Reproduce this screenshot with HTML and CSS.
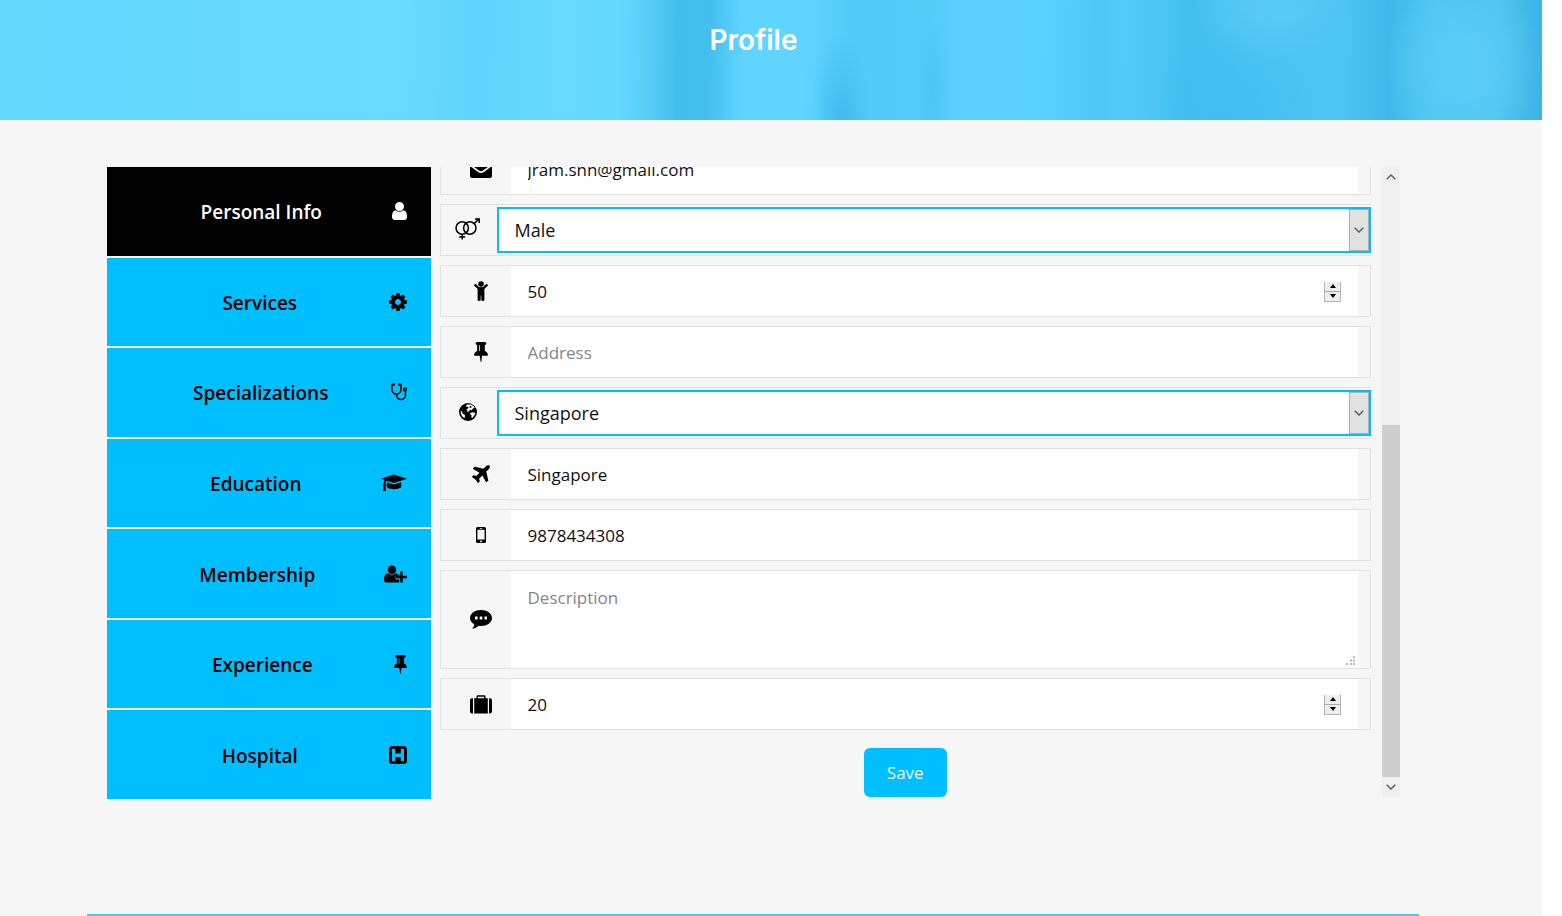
FILE: index.html
```html
<!DOCTYPE html>
<html lang="en">
<head>
<meta charset="utf-8">
<meta name="viewport" content="width=device-width, initial-scale=1">
<title>Profile</title>
<link rel="stylesheet" href="styles.css">
</head>
<body>
<svg class="sprite" aria-hidden="true">
  <symbol id="pin" viewBox="320 128 1152 1664"><path d="M800 864v-448q0-14-9-23t-23-9-23 9-9 23v448q0 14 9 23t23 9 23-9 9-23zm672 352q0 26-19 45t-45 19h-429l-51 483q-2 12-10.500 20.500t-20.500 8.500h-1q-27 0-32-27l-76-485h-404q-26 0-45-19t-19-45q0-123 78.500-221.500t177.500-98.500v-512q-52 0-90-38t-38-90 38-90 90-38h640q52 0 90 38t38 90-38 90-90 38v512q99 0 177.500 98.500t78.500 221.500z"/></symbol>
  <symbol id="chevron" viewBox="0 0 10 6"><path d="M0.700 0.700 5 5 9.300 0.700" fill="none" stroke="#606060" stroke-width="1.500"/></symbol>
</svg>
<div class="page">
  <header class="banner"><h1 class="banner-title">Profile</h1></header>
  <main class="content">
    <nav class="tabs" aria-label="Profile sections">
      <button class="tab tab-active" type="button"><span class="tab-label">Personal Info</span>
        <svg width="15" height="18" viewBox="256 128 1280 1536"><path d="M1536 1399q0 109-62.500 187t-150.500 78h-854q-88 0-150.500-78t-62.500-187q0-85 8.500-160.500t31.500-152 58.500-131 94-89 134.500-34.500q131 128 313 128t313-128q76 0 134.500 34.500t94 89 58.500 131 31.500 152 8.500 160.500zm-256-887q0 159-112.500 271.500t-271.500 112.500-271.500-112.500-112.500-271.500 112.500-271.500 271.500-112.500 271.500 112.500 112.500 271.500z"/></svg></button>
      <button class="tab" type="button"><span class="tab-label">Services</span>
        <svg width="18" height="18" viewBox="128 128 1536 1536"><path d="M1152 896q0-106-75-181t-181-75-181 75-75 181 75 181 181 75 181-75 75-181zm512-109v222q0 12-8 23t-20 13l-185 28q-19 54-39 91 35 50 107 138 10 12 10 25t-9 23q-27 37-99 108t-94 71q-12 0-26-9l-138-108q-44 23-91 38-16 136-29 186-7 28-36 28h-222q-14 0-24.500-8.500t-11.500-21.500l-28-184q-49-16-90-37l-141 107q-10 9-25 9-14 0-25-11-126-114-165-168-7-10-7-23 0-12 8-23 15-21 51-66.500t54-70.500q-27-50-41-99l-183-27q-13-2-21-12.500t-8-23.500v-222q0-12 8-23t19-13l186-28q14-46 39-92-40-57-107-138-10-12-10-24 0-10 9-23 26-36 98.500-107.500t94.500-71.500q13 0 26 10l138 107q44-23 91-38 16-136 29-186 7-28 36-28h222q14 0 24.500 8.500t11.500 21.500l28 184q49 16 90 37l142-107q9-9 24-9 13 0 25 10 129 119 165 170 7 8 7 22 0 12-8 23-15 21-51 66.500t-54 70.500q26 50 41 98l183 28q13 2 21 12.500t8 23.500z"/></svg></button>
      <button class="tab" type="button"><span class="tab-label">Specializations</span>
        <svg width="16" height="18" viewBox="0 0 16 18"><path d="M2.500 1.600H1V6.500a4.500 4.500 0 0 0 9 0V1.600H8.500M5.500 11.200V12a4.500 4.500 0 0 0 9 0V8" fill="none" stroke="currentColor" stroke-width="1.500"/><circle cx="2.700" cy="1.500" r="1.300"/><circle cx="8.300" cy="1.500" r="1.300"/><circle cx="14" cy="6.500" r="1.400" fill="none" stroke="currentColor" stroke-width="1.300"/></svg></button>
      <button class="tab" type="button"><span class="tab-label">Education</span>
        <svg width="26" height="18" viewBox="0 0 26 18"><path d="M13 .5 26 4.800 13 9.100 5.600 6.700Q4.500 7.500 4.400 10a1.300 1.300 0 0 1 .1 2.200L5 17H2l.5-4.800a1.300 1.300 0 0 1 .1-2.200Q2.700 7.500 3.700 6.100L0 4.800ZM6 8.200l7 2.300 7-2.300.4 4.400C19.500 16.100 6.500 16.100 5.600 12.600Z"/></svg></button>
      <button class="tab" type="button"><span class="tab-label">Membership</span>
        <svg width="23" height="18" viewBox="0 0 23 18"><circle cx="8" cy="4.700" r="4.300"/><path d="M4 8.200q4 3.300 8 0 1.500.2 2.300 1.300H15.300v1.800h-3.800v3.200h3.800v2.700q-.6.400-1.500.4H2.800Q0 17.600 0 14.500 0 8.600 4 8.200Z"/><path d="M16.300 6.500h2.400v4.300H23v2.400h-4.300v4.300h-2.400v-4.300H12v-2.400h4.300Z"/></svg></button>
      <button class="tab" type="button"><span class="tab-label">Experience</span>
        <svg width="13" height="19"><use href="#pin"/></svg></button>
      <button class="tab" type="button"><span class="tab-label">Hospital</span>
        <svg width="18" height="18" viewBox="0 0 18 18"><path fill-rule="evenodd" d="M3.500 0h11Q18 0 18 3.500v11q0 3.500-3.500 3.500h-11Q0 18 0 14.500v-11Q0 0 3.500 0ZM3 3.500v11q0 .7.700.7H5.500q.7 0 .7-.7V11h5.600v3.500q0 .7.700.7h1.800q.7 0 .7-.7v-11q0-.7-.7-.7H12.500q-.7 0-.7.700V7.500H6.200v-4q0-.7-.7-.7H3.700q-.7 0-.7.700Z"/></svg></button>
    </nav>

    <form class="panel">
      <div class="fields">
        <div class="row">
          <label class="icon" for="email" aria-label="Email"><svg width="22" height="18" viewBox="0 0 22 18"><path d="M0 2Q0 0 2 0H20Q22 0 22 2 22 4 20 5.500L13 10.500Q11 12 9 10.500L2 5.500Q0 4 0 2ZM0 6 8 12Q11 14.200 14 12L22 6V16Q22 18 20 18H2Q0 18 0 16Z"/></svg></label>
          <input class="control" id="email" type="email" value="jram.snn@gmail.com">
        </div>
        <div class="row row-select">
          <label class="icon" for="gender" aria-label="Gender"><svg width="25" height="22" viewBox="0 0 25 22"><g fill="none" stroke="currentColor" stroke-width="1.500"><circle cx="7.200" cy="10" r="6.200"/><circle cx="14.800" cy="10" r="6.200"/><path d="M7.200 16v5.500M4.200 19h6M19.200 5.600 24 .8M20 .9h4.200V5"/></g></svg></label>
          <span class="select-box"><select class="select" id="gender"><option>Male</option><option>Female</option></select><span class="select-arrow"><svg width="10" height="6"><use href="#chevron"/></svg></span></span>
        </div>
        <div class="row">
          <label class="icon" for="age" aria-label="Age"><svg width="14" height="20" viewBox="0 0 14 20"><circle cx="7" cy="3" r="2.800"/><path d="M1.300 4.200 4.700 7.400H9.300L12.700 4.200" fill="none" stroke="currentColor" stroke-width="2.300" stroke-linecap="round"/><path d="M3.600 6.500h6.800v12.300q-.2 1.200-1.600 1.200T7.300 18.800V14.500H6.700V18.800q0 1.200-1.500 1.200T3.600 18.800Z"/></svg></label>
          <span class="number-box"><input class="control" id="age" type="number" value="50"><span class="spinner"><i class="step step-up"></i><i class="step step-down"></i></span></span>
        </div>
        <div class="row">
          <label class="icon" for="address" aria-label="Address"><svg width="14" height="20"><use href="#pin"/></svg></label>
          <input class="control" id="address" type="text" placeholder="Address">
        </div>
        <div class="row row-select">
          <label class="icon" for="country" aria-label="Country"><svg width="18" height="18" viewBox="0 0 18 18"><circle cx="9" cy="9" r="9"/><path fill="#f5f5f5" d="M8 1.500 12 1.500 14.500 3 16 5.300 14.500 5 13.300 6.500 12.300 7.200 10.800 6.900 9.800 8.600 7.800 8.900 8.600 7.200 7 6.300 8.800 5.700 9.500 4.300 8 3.500 6.500 3.700ZM11.500 9.800 14.300 9.300 16.300 10 15.500 12.300 13.300 15 12.300 14.300 12.500 12.200 11 11.300ZM1.700 7.500 3 8.800 3.900 10.800 5.900 12 6 13.400 5.300 15.200 3.200 13.300 1.800 10.800Z"/><path d="M11 2.800 12.700 3.700 12 4.900 10.300 4.200Z"/></svg></label>
          <span class="select-box"><select class="select" id="country"><option>Singapore</option></select><span class="select-arrow"><svg width="10" height="6"><use href="#chevron"/></svg></span></span>
        </div>
        <div class="row">
          <label class="icon" for="city" aria-label="City"><svg width="18" height="18" viewBox="186 120 1420 1420"><path d="M1568 160q44 52 12 148t-108 172l-161 161 160 696q5 19-12 33l-128 96q-7 6-19 6-4 0-7-1-15-3-21-16l-279-508-259 259 53 194q5 17-8 31l-96 96q-9 9-23 9h-2q-15-2-24-13l-189-252-252-189q-11-7-13-23-1-13 9-25l96-97q9-9 23-9 6 0 8 1l194 53 259-259-508-279q-14-8-17-24-2-16 9-27l128-128q14-13 30-8l665 159 160-160q76-76 172-108t148 12z"/></svg></label>
          <input class="control" id="city" type="text" value="Singapore">
        </div>
        <div class="row">
          <label class="icon" for="phone" aria-label="Phone"><svg width="10" height="16" viewBox="0 0 10 16"><path fill-rule="evenodd" d="M1.500 0h7Q10 0 10 1.500v13Q10 16 8.500 16h-7Q0 16 0 14.500v-13Q0 0 1.500 0ZM1.400 2.700v9.800h7.200V2.700ZM3.700 1v.7h2.600V1ZM5 13.400a.9.900 0 1 0 .1 0Z"/></svg></label>
          <input class="control" id="phone" type="tel" value="9878434308">
        </div>
        <div class="row row-tall">
          <label class="icon" for="description" aria-label="Description"><svg width="22" height="19" viewBox="0 0 22 19"><path fill-rule="evenodd" d="M11 0c6 0 11 3.500 11 8s-5 8-11 8q-1.200 0-2.200-.2Q6 18.500 2 18.800 4 17 4.300 14.200 0 11.900 0 8C0 3.500 5 0 11 0ZM5 6.600v2.800h2.600V6.600ZM9.700 6.600v2.800h2.600V6.600ZM14.400 6.600v2.800H17V6.600Z"/></svg></label>
          <span class="text-box"><textarea class="control control-area" id="description" placeholder="Description"></textarea>
            <svg class="grip" width="10" height="10" viewBox="0 0 10 10"><path d="M7 0h2v2H7zM4 3.500h2v2H4zM7 3.500h2v2H7zM0 7h2v2H0zM4 7h2v2H4zM7 7h2v2H7z"/></svg></span>
        </div>
        <div class="row">
          <label class="icon" for="years" aria-label="Years of experience"><svg width="22" height="19" viewBox="0 0 22 19"><path d="M3 3.300V18.500H2Q0 18.500 0 16.500V5.300Q0 3.300 2 3.300ZM19 3.300h1Q22 3.300 22 5.300v11.200q0 2-2 2H19ZM4.200 3.300H6.500V1.500Q6.500.3 7.700.3h6.600Q15.500.3 15.500 1.500V3.300h2.300V18.500H4.200ZM8 1.800V3.300h6V1.800Z"/></svg></label>
          <span class="number-box"><input class="control" id="years" type="number" value="20"><span class="spinner"><i class="step step-up"></i><i class="step step-down"></i></span></span>
        </div>
        <button class="save" type="submit">Save</button>
      </div>
      <div class="scrollbar" aria-hidden="true">
        <span class="scroll-arrow scroll-up"><svg width="10" height="6"><use href="#chevron"/></svg></span>
        <span class="scroll-space"></span>
        <span class="scroll-thumb"></span>
        <span class="scroll-arrow"><svg width="10" height="6"><use href="#chevron"/></svg></span>
      </div>
    </form>
  </main>
  <footer class="footer"></footer>
</div>
</body>
</html>
```
FILE: styles.css
```css
* { box-sizing: border-box; }

body {
  margin: 0;
  background: #fff;
  font-family: "Open Sans", "Noto Sans", sans-serif;
  font-size: 17px;
  color: #111;
}

svg { display: block; flex: none; fill: currentColor; }
.sprite { position: absolute; width: 0; height: 0; }

.page {
  display: flex;
  flex-direction: column;
  min-height: 100vh;
  margin-right: 20px;
  background: #f6f6f6;
}

.banner {
  height: 120px;
  padding: 19px 141px 0 106px;
  text-align: center;
  background:
    radial-gradient(ellipse 30px 90px at 54.500% 100%, #35b2e690 10%, #35b2e600),
    radial-gradient(ellipse 18px 80px at 60.500% 75%, #42bbec70, #42bbec00),
    radial-gradient(ellipse 80px 60px at 82.500% 0%, #60cef7a0 30%, #60cef700),
    radial-gradient(ellipse 80px 90px at 95% 55%, #5fd0f8a0 30%, #5fd0f800),
    radial-gradient(ellipse 90px 80px at 80% 100%, #3bb9ef80, #3bb9ef00),
    linear-gradient(91deg, #64d9ff 0%, #6adaff 26%, #60d4fb 31%, #68daff 36%, #66d9ff 40%, #58cef6 42%, #42bdec 44%, #43beed 46%, #5fd4ff 48%, #60d5ff 52%, #54caf8 55%, #55cbf8 60%, #5cd1ff 63%, #59cffd 68%, #4fc8f6 71%, #54cbf9 73%, #43bfee 77%, #4ac3f2 82%, #4dc4f2 87%, #40b9ea 90%, #50c6f2 93%, #50c4f0 97%, #3ab2e4 100%);
}

.banner-title {
  margin: 0;
  font-family: Inter, sans-serif;
  font-size: 28px;
  line-height: 42px;
  font-weight: 600;
  color: #fff;
}

.content {
  display: grid;
  grid-template-columns: 1fr 3fr;
  padding: 47px 141px 0 107px;
}

.tabs {
  display: grid;
  grid-auto-rows: 1fr;
  gap: 2px;
  height: 632px;
  background: #fff;
}

.tab {
  display: flex;
  align-items: center;
  padding: 0 24px;
  border: 0;
  background: #00bfff;
  color: #000;
  font: 600 19px/26px "Open Sans", "Noto Sans", sans-serif;
}

.tab-active { background: #000; color: #fff; }
.tab-label { flex: 1; padding-top: 2px; text-align: center; }

.panel {
  display: flex;
  gap: 11px;
  height: 630px;
  margin: 0;
  padding-left: 9px;
}

.fields {
  flex: 1;
  display: flex;
  flex-direction: column;
  justify-content: flex-end;
  gap: 9px;
  overflow: hidden;
}

.row {
  flex: none;
  display: flex;
  height: 52px;
  padding-right: 12px;
  border: 1px solid #e2e2e2;
}

.row-tall { height: 99px; }

.icon {
  flex: none;
  display: flex;
  align-items: center;
  justify-content: center;
  width: 70px;
  padding-left: 10px;
  color: #000;
}

.control {
  flex: 1;
  width: 100%;
  min-width: 0;
  height: 100%;
  padding: 0 17px;
  border: 0;
  border-radius: 0;
  outline: 0;
  background: #fff;
  color: #111;
  font: inherit;
  appearance: textfield;
}

.control::placeholder { color: #868686; opacity: 1; }
.control::-webkit-inner-spin-button { appearance: none; margin: 0; }
.control-area { display: block; padding-top: 15px; line-height: 24px; resize: none; }

.number-box,
.text-box { position: relative; flex: 1; }

.grip { position: absolute; right: 2px; bottom: 2px; color: #b8b8b8; }

.spinner {
  position: absolute;
  top: 16px;
  right: 17px;
  display: grid;
  grid-template-rows: 1fr 1fr;
  width: 17px;
  height: 20px;
  border: 1px solid #b4b4b4;
  border-top: 0;
  background: #eee;
}

.step { display: grid; place-items: center; }
.step-up { border-bottom: 1px solid #aaa; }
.step::before { content: ""; border: 3px solid transparent; }
.step-up::before { border-top: 0; border-bottom: 4px solid #000; }
.step-down::before { border-bottom: 0; border-top: 4px solid #000; }

.row-select { padding: 0; border-right: 0; }
.row-select .icon { width: 56px; padding: 0 2px 2px 0; }

.select-box { position: relative; flex: 1; padding: 2px 0; }

.select {
  width: 100%;
  height: 46px;
  padding: 0 16px;
  border: 2px solid #00bfff;
  border-radius: 0;
  background: #fff;
  color: #111;
  font: 18px "Open Sans", "Noto Sans", sans-serif;
  appearance: none;
}

.select-arrow {
  position: absolute;
  top: 4px;
  right: 2px;
  display: grid;
  place-items: center;
  width: 20px;
  height: 42px;
  border: 1px solid #adadad;
  background: #e1e1e1;
  pointer-events: none;
}

.save {
  flex: none;
  align-self: center;
  margin-top: 9px;
  padding: 0 23px;
  border: 0;
  border-radius: 6px;
  background: #00bfff;
  color: #e8f8ff;
  font: 17px/49px "Open Sans", "Noto Sans", sans-serif;
}

.scrollbar {
  flex: none;
  display: flex;
  flex-direction: column;
  width: 18px;
  margin-right: 1px;
  background: #f0f0f0;
}

.scroll-arrow { display: grid; place-items: center; height: 20px; }
.scroll-up { transform: rotate(180deg); }
.scroll-space { flex: 238; }
.scroll-thumb { flex: 352; background: #cdcdcd; }

.footer {
  height: 2px;
  margin: auto 123px 0 87px;
  background: #55bdf5;
}
```
